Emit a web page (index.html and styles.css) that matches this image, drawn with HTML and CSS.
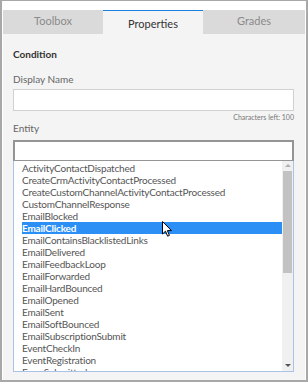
FILE: index.html
```html
<!DOCTYPE html>
<html lang="en">
<head>
  <meta charset="UTF-8" />
  <title>Properties</title>
  <link rel="stylesheet" href="styles.css">
</head>
<body>
  <div class="frame">
    <div class="panel">
      <div class="tabs">
        <div class="tab">Toolbox</div>
        <div class="tab active">Properties</div>
        <div class="tab">Grades</div>
      </div>

      <div class="content">
        <div class="section">Condition</div>

        <div class="label">Display Name</div>
        <div class="input"></div>
        <div class="hint">Characters left: 100</div>

        <div class="label entity-label">Entity</div>
        <div class="input dark"></div>

        <div class="listbox">
          <div class="items">
            <div class="item">ActivityContactDispatched</div>
            <div class="item">CreateCrmActivityContactProcessed</div>
            <div class="item">CreateCustomChannelActivityContactProcessed</div>
            <div class="item">CustomChannelResponse</div>
            <div class="item">EmailBlocked</div>
            <div class="item selected">EmailClicked</div>
            <div class="item">EmailContainsBlacklistedLinks</div>
            <div class="item">EmailDelivered</div>
            <div class="item">EmailFeedbackLoop</div>
            <div class="item">EmailForwarded</div>
            <div class="item">EmailHardBounced</div>
            <div class="item">EmailOpened</div>
            <div class="item">EmailSent</div>
            <div class="item">EmailSoftBounced</div>
            <div class="item">EmailSubscriptionSubmit</div>
            <div class="item">EventCheckIn</div>
            <div class="item">EventRegistration</div>
            <div class="item">FormSubmitted</div>
          </div>
          <div class="scrollbar">
            <div class="arrow up"></div>
            <div class="thumb"></div>
            <div class="arrow down"></div>
          </div>

          <!-- mouse pointer over the selected row -->
          <svg class="cursor" width="11" height="17" viewBox="0 0 11 17">
            <path d="M0.5 0.5 L0.5 13 L3.5 10.2 L5.6 15.2 L7.4 14.4 L5.4 9.6 L9.5 9.6 Z" fill="#fff" stroke="#000" stroke-width="1" stroke-linejoin="round"/>
          </svg>
        </div>
      </div>
    </div>
  </div>
</body>
</html>
```

FILE: styles.css
```css
* {
  box-sizing: border-box;
}

body {
  margin: 0;
  background: #fff;
  font-family: Lato, 'Noto Sans', sans-serif;
}

.frame {
  width: 308px;
  height: 382px;
  border: 2px solid #a8a8a8;
  border-top-width: 1px;
  padding: 9px 1px 0 1px;
  display: flex;
}

.panel {
  flex: 1;
  display: flex;
  flex-direction: column;
  background: #f4f4f4;
}

.tabs {
  display: flex;
  height: 24px;
}

.tab {
  width: 100px;
  background: #dadada;
  color: #8a8a8a;
  font-size: 11px;
  text-align: center;
  line-height: 22px;
}

.tab:last-child {
  flex: 1;
}

.tab.active {
  background: #f4f4f4;
  color: #333;
  border-top: 1px solid #1a7fe0;
  line-height: 25px;
}

.content {
  padding: 13px 11px 0 10px;
  display: flex;
  flex-direction: column;
}

.section {
  font-size: 10px;
  font-weight: 700;
  color: #333;
  line-height: 14px;
}

.label {
  font-size: 10px;
  color: #666;
  line-height: 14px;
  margin-top: 11px;
}

.entity-label {
  margin-top: -2px;
}

.input {
  height: 22px;
  margin-top: 3px;
  background: #fff;
  border: 1px solid #d0d0d0;
}

.input.dark {
  height: 21px;
  margin-top: 5px;
  border: 2px solid #959595;
  border-bottom-width: 1px;
}

.hint {
  font-size: 7px;
  color: #777;
  text-align: right;
  line-height: 12px;
}

.listbox {
  position: relative;
  height: 211px;
  background: #fff;
  border: 1px solid #a9c2e6;
  border-top: none;
  display: flex;
  overflow: hidden;
}

.items {
  flex: 1;
  padding: 1px 0 0 8px;
  overflow: hidden;
}

.item {
  height: 12px;
  line-height: 12px;
  font-size: 10px;
  letter-spacing: -0.2px;
  color: #555;
  white-space: nowrap;
}

.item.selected {
  background: #2b8ff5;
  color: #fff;
  font-weight: 700;
}

.scrollbar {
  width: 11px;
  background: #f0f0f0;
  display: flex;
  flex-direction: column;
  align-items: center;
  padding: 3px 0 4px;
}

.arrow {
  width: 0;
  height: 0;
  border-left: 3px solid transparent;
  border-right: 3px solid transparent;
}

.arrow.up {
  border-bottom: 3px solid #b0b0b0;
}

.arrow.down {
  margin-top: auto;
  border-top: 3px solid #555;
}

.thumb {
  width: 9px;
  height: 102px;
  margin-top: 4px;
  background: #c2c2c2;
}

.cursor {
  position: absolute;
  left: 148px;
  top: 60px;
}
```
